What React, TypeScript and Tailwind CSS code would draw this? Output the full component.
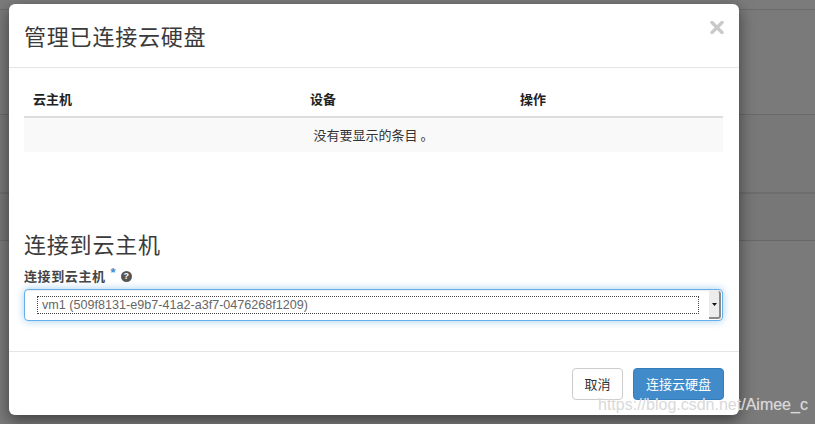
import React from "react";

const cjk = { fontFamily: '"Noto Sans CJK SC", "Liberation Sans", sans-serif' };
const latin = { fontFamily: '"Liberation Sans", Arial, sans-serif' };

export default function App() {
  return (
    <div className="relative w-[815px] h-[424px] overflow-hidden bg-[#787878]" style={cjk}>
      {/* underlying page (dimmed) */}
      <div className="flex flex-col h-full">
        <div className="h-[9px] bg-[#7b7b7b]" />
        <div className="h-px bg-[#6a6a6a]" />
        <div className="h-[104px] bg-[#7a7a7a]" />
        <div className="h-px bg-[#6a6a6a]" />
        <div className="h-[77px] bg-[#787878]" />
        <div className="h-[2px] bg-[#6d6d6d]" />
        <div className="h-[46px] bg-[#777777]" />
        <div className="h-px bg-[#686868]" />
        <div className="flex-1 bg-[#7a7a7a]" />
      </div>

      {/* modal */}
      <div className="absolute left-[9px] top-[4px] w-[730px] bg-white rounded-[6px] shadow-[0_5px_15px_rgba(0,0,0,0.5)] flex flex-col">
        {/* header */}
        <div className="h-[64px] border-b border-[#e5e5e5] px-[15px] flex items-start justify-between">
          <h4 className="mt-[19px] text-[22px] leading-[24px] text-[#3a3a3a] font-normal tracking-[0.8px]">管理已连接云硬盘</h4>
          <button className="mt-[17px] w-[14px] h-[13px] flex items-center justify-center">
            <svg width="14" height="13" viewBox="0 0 14 13">
              <path d="M2 1.5 L12 11.5 M12 1.5 L2 11.5" stroke="#c9c9c9" strokeWidth="3.4" strokeLinecap="round" />
            </svg>
          </button>
        </div>

        {/* body */}
        <div className="pt-[14px] px-[15px] pb-[30px] flex flex-col">
          <div className="w-[699px] flex flex-col text-[13px]">
            <div className="h-[36px] border-b-2 border-[#dddddd] flex items-center font-bold text-[#222]">
              <div className="w-[278px] pl-[9px]">云主机</div>
              <div className="w-[210px] pl-[8px]">设备</div>
              <div className="flex-1 pl-[8px]">操作</div>
            </div>
            <div className="h-[34px] bg-[#f9f9f9] flex items-center justify-center text-[#333]">
              没有要显示的条目 。
            </div>
          </div>

          <h3 className="mt-[79px] h-[24px] text-[22px] leading-[24px] text-[#3a3a3a] font-normal tracking-[0.8px]">连接到云主机</h3>

          <div className="mt-[12px] h-[18px] flex items-center text-[13px] leading-[18px]">
            <span className="font-bold text-[#444] tracking-[0.6px]">连接到云主机</span>
            <span className="ml-[5px] -mt-[7px] text-[#428bca] font-bold text-[13px]" style={latin}>*</span>
            <span className="ml-[5px] w-[11px] h-[11px] rounded-full bg-[#555] text-white text-[9px] font-bold leading-[11px] flex items-center justify-center" style={latin}>?</span>
          </div>

          <div className="mt-[4px] w-[699px] h-[32px] rounded-[4px] border border-[#66afe9] shadow-[inset_0_1px_1px_rgba(0,0,0,0.075),0_0_8px_rgba(102,175,233,0.6)] flex items-center pl-[12px] pr-[1px] bg-white">
            <div className="flex-1 h-[18px] border border-dotted border-[#444] flex items-center pl-[4px] text-[12.6px] text-[#666]" style={latin}>
              vm1 (509f8131-e9b7-41a2-a3f7-0476268f1209)
            </div>
            <div className="ml-[10px] w-[12px] h-[28px] bg-[#ececec] border-r-[2px] border-b-[2px] border-[#8a8a8a] rounded-r-[3px] flex items-center justify-center">
              <svg width="5" height="3" viewBox="0 0 5 3">
                <path d="M0 0 L5 0 L2.5 3 Z" fill="#111" />
              </svg>
            </div>
          </div>
        </div>

        {/* footer */}
        <div className="h-[64px] border-t border-[#e5e5e5] px-[15px] flex items-center justify-end gap-[10px]">
          <button className="h-[32px] w-[51px] rounded-[4px] border border-[#cccccc] bg-white text-[13px] text-[#333]">取消</button>
          <button className="h-[32px] w-[91px] rounded-[4px] border border-[#357ebd] bg-[#428bca] text-[13px] text-white">连接云硬盘</button>
        </div>
      </div>

      {/* watermark */}
      <div className="absolute left-[598px] top-[395px] text-[16px] leading-[20px] text-[#d9d9d9] [text-shadow:0_0_1px_rgba(255,255,255,0.4)]" style={latin}>
        https://blog.csdn.net/Aimee_c
      </div>
    </div>
  );
}
